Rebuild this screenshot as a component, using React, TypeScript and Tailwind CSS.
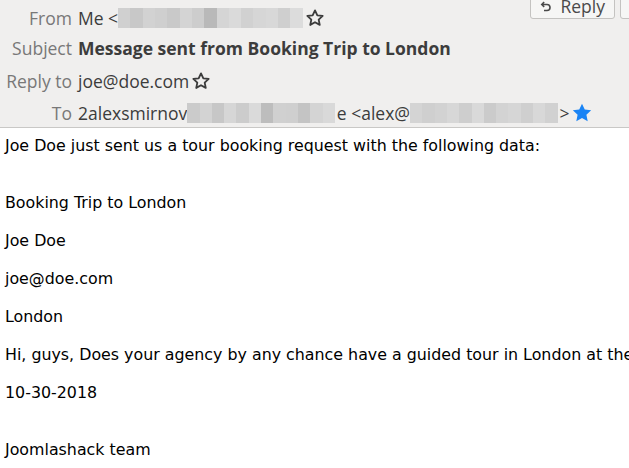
import React from "react";

const Blur = ({ shades }: { shades: string[] }) => (
  <span className="inline-flex h-[20px] align-middle">
    {shades.map((c, i) => (
      <span key={i} className="h-full w-[12.3px]" style={{ background: c }} />
    ))}
  </span>
);

const StarOutline = ({ className = "" }: { className?: string }) => (
  <svg viewBox="0 0 24 24" className={className} fill="none" stroke="#3c3c3c" strokeWidth="2.2" strokeLinejoin="round">
    <path d="M12 2.8l2.8 6 6.4.7-4.8 4.4 1.3 6.4L12 17.1l-5.7 3.2 1.3-6.4-4.8-4.4 6.4-.7z" />
  </svg>
);

const StarFilled = ({ className = "" }: { className?: string }) => (
  <svg viewBox="0 0 24 24" className={className} fill="#1a84f5">
    <path d="M12 1.8l3 6.5 7 .8-5.2 4.8 1.4 7L12 17.4l-6.2 3.5 1.4-7L2 9.1l7-.8z" />
  </svg>
);

const ReplyArrow = () => (
  <svg viewBox="0 0 12 12" className="w-[12px] h-[12px]" fill="none" stroke="#4a4a4a" strokeWidth="1.6">
    <path d="M2 3.5h5a3 3 0 0 1 0 6H4" />
    <path d="M4.2 1.2L1.8 3.5l2.4 2.3" />
  </svg>
);

const fromShades = ["#d0d0d0", "#c8c8c8", "#d2d2d2", "#cfcfcf", "#c9c9c9", "#d4d4d4", "#cdcdcd", "#b9b9b9", "#d5d5d5", "#dadada", "#d1d1d1", "#d6d6d6", "#d8d8d8", "#cfcfcf", "#dcdcdc"];
const nameShades = ["#cbcbcb", "#d3d3d3", "#c7c7c7", "#d6d6d6", "#cccccc", "#dadada", "#bdbdbd", "#d0d0d0", "#cfcfcf", "#c4c4c4", "#d4d4d4", "#d9d9d9"];
const addrShades = ["#d4d4d4", "#cfcfcf", "#d2d2d2", "#d7d7d7", "#cecece", "#d9d9d9", "#cbcbcb", "#d3d3d3", "#d6d6d6", "#cfcfcf", "#d8d8d8", "#d1d1d1"];

export default function App() {
  return (
    <div className="w-[629px] h-[468px] overflow-hidden bg-white">
      <div className="relative h-[128px] bg-[#f0efee] border-b border-[#c9c8c6] font-['Open_Sans',sans-serif] text-[17.5px]">
        <div className="absolute right-[14px] top-[-6px] flex items-center h-[25px] px-[9px] gap-[8px] border border-[#c4c3c1] rounded-[3px] bg-[#f6f6f5] text-[#4a4a4a] text-[17.5px]">
          <ReplyArrow />
          <span>Reply</span>
        </div>
        <div className="absolute right-[-6px] top-[-6px] h-[25px] w-[15px] border border-[#c4c3c1] rounded-[3px] bg-[#f6f6f5]" />
        <div className="grid grid-cols-[72px_1fr] gap-x-[6px] pt-[4px]">
          <div className="h-[28px] flex items-center justify-end text-[#787878] whitespace-nowrap">From</div>
          <div className="h-[28px] flex items-center text-[#3c3c3c] whitespace-nowrap">
            <span>Me &lt;</span>
            <Blur shades={fromShades} />
            <StarOutline className="w-[20px] h-[20px] ml-[2px]" />
          </div>
          <div className="h-[32px] flex items-center justify-end text-[#787878] whitespace-nowrap">Subject</div>
          <div className="h-[32px] flex items-center text-[#3c3c3c] font-bold whitespace-nowrap">Message sent from Booking Trip to London</div>
          <div className="h-[34px] flex items-center justify-end text-[#787878] whitespace-nowrap">Reply to</div>
          <div className="h-[34px] flex items-center text-[#3c3c3c] whitespace-nowrap">
            <span>joe@doe.com</span>
            <StarOutline className="w-[20px] h-[20px] ml-[2px]" />
          </div>
          <div className="h-[30px] flex items-center justify-end text-[#787878] whitespace-nowrap">To</div>
          <div className="h-[30px] flex items-center text-[#3c3c3c] whitespace-nowrap">
            <span>2alexsmirnov</span>
            <Blur shades={nameShades} />
            <span className="ml-[2px]">e &lt;alex@</span>
            <Blur shades={addrShades} />
            <span className="ml-[2px]">&gt;</span>
            <StarFilled className="w-[22px] h-[22px] ml-[1px]" />
          </div>
        </div>
      </div>
      <div className="px-[5px] pt-[8px] font-['DejaVu_Sans',sans-serif] text-[15.85px] leading-[19px] text-black whitespace-nowrap">
        <p>Joe Doe just sent us a tour booking request with the following data:</p>
        <div className="h-[19px]" />
        <p className="mt-[19px]">Booking Trip to London</p>
        <p className="mt-[19px]">Joe Doe</p>
        <p className="mt-[19px]">joe@doe.com</p>
        <p className="mt-[19px]">London</p>
        <p className="mt-[19px]">Hi, guys, Does your agency by any chance have a guided tour in London at the end of October?</p>
        <p className="mt-[19px]">10-30-2018</p>
        <div className="h-[19px]" />
        <p className="mt-[19px]">Joomlashack team</p>
      </div>
    </div>
  );
}
